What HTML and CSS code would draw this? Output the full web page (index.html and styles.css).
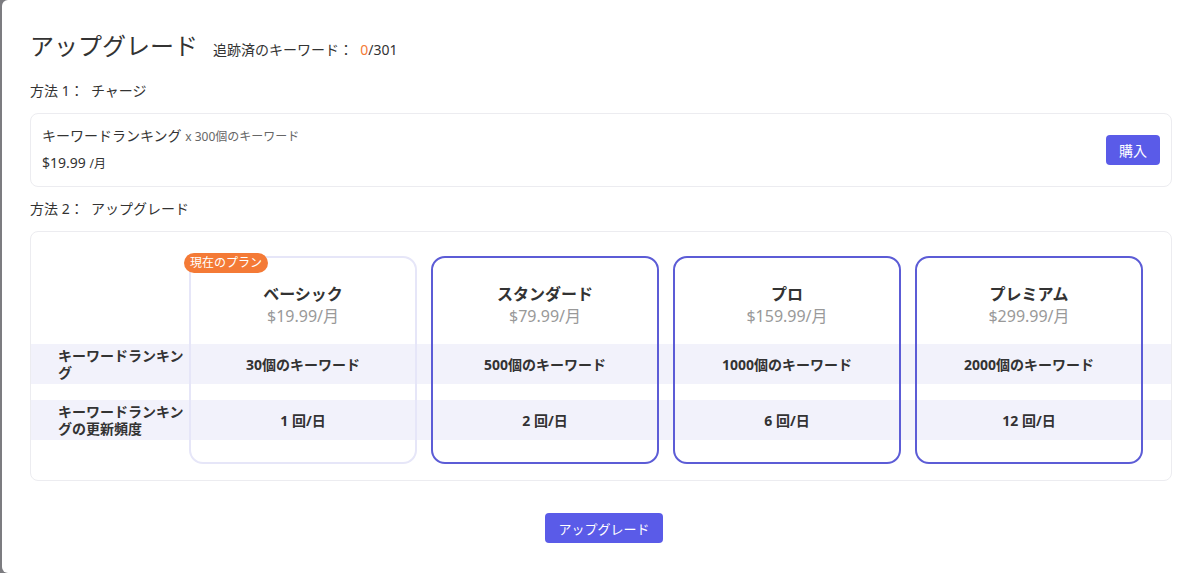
FILE: index.html
```html
<!DOCTYPE html>
<html lang="ja">
<head>
    <meta charset="UTF-8">
    <meta name="viewport" content="width=device-width, initial-scale=1.0">
    <title>アップグレード</title>
    <link rel="stylesheet" href="styles.css">
</head>
<body>
    <div class="modal">
        <div class="modal-head">
            <h2>アップグレード</h2>
            <span class="tracked">追跡済のキーワード：&nbsp;&nbsp;<span class="used">0</span>/301</span>
        </div>

        <div class="method">方法 1：&nbsp;&nbsp;チャージ</div>
        <div class="charge-card">
            <div class="charge-info">
                <div class="charge-title">キーワードランキング <small>x 300個のキーワード</small></div>
                <div class="charge-price">$19.99 <small>/月</small></div>
            </div>
            <button class="btn buy">購入</button>
        </div>

        <div class="method second">方法 2：&nbsp;&nbsp;アップグレード</div>
        <div class="plans-card">
            <div class="plans">
                <div class="row-bg r1"></div>
                <div class="row-bg r2"></div>

                <div class="label r1">キーワードランキング</div>
                <div class="label r2">キーワードランキングの更新頻度</div>

                <div class="plan current c1">
                    <span class="badge">現在のプラン</span>
                    <div class="plan-name">ベーシック</div>
                    <div class="plan-price">$19.99/月</div>
                </div>
                <div class="plan c2">
                    <div class="plan-name">スタンダード</div>
                    <div class="plan-price">$79.99/月</div>
                </div>
                <div class="plan c3">
                    <div class="plan-name">プロ</div>
                    <div class="plan-price">$159.99/月</div>
                </div>
                <div class="plan c4">
                    <div class="plan-name">プレミアム</div>
                    <div class="plan-price">$299.99/月</div>
                </div>

                <div class="cell r1 c1">30個のキーワード</div>
                <div class="cell r1 c2">500個のキーワード</div>
                <div class="cell r1 c3">1000個のキーワード</div>
                <div class="cell r1 c4">2000個のキーワード</div>

                <div class="cell r2 c1">1 回/日</div>
                <div class="cell r2 c2">2 回/日</div>
                <div class="cell r2 c3">6 回/日</div>
                <div class="cell r2 c4">12 回/日</div>
            </div>
        </div>

        <div class="actions">
            <button class="btn upgrade">アップグレード</button>
        </div>
    </div>
</body>
</html>
```

FILE: styles.css
```css
html, body {
    margin: 0;
    height: 100%;
}
body {
    background-color: #7c7c80;
    font-family: "Noto Sans", "Noto Sans CJK JP", sans-serif;
    color: #333;
    overflow: hidden;
}
.modal {
    box-sizing: border-box;
    height: 573px;
    margin-left: 2px;
    padding: 30px 17px 0 28px;
    background-color: #fff;
    border-radius: 6px 0 0 6px;
}
.modal-head {
    display: flex;
    align-items: baseline;
    gap: 15px;
}
.modal-head h2 {
    margin: 0;
    font-size: 24px;
    font-weight: 400;
    line-height: 32px;
}
.tracked {
    font-size: 14px;
}
.used {
    color: #f47a36;
}
.method {
    margin-top: 19px;
    font-size: 14px;
    line-height: 20px;
}
.method.second {
    margin-top: 12px;
}
.charge-card {
    margin-top: 12px;
    display: flex;
    align-items: center;
    justify-content: space-between;
    padding: 12px 11px;
    border: 1px solid #ececf0;
    border-radius: 8px;
}
.charge-title,
.charge-price {
    font-size: 14px;
    line-height: 20px;
}
.charge-price {
    margin-top: 6px;
}
.charge-info small {
    font-size: 12px;
    color: #666;
}
.charge-price small {
    color: #333;
}
.btn {
    border: none;
    border-radius: 4px;
    background-color: #5a5be8;
    color: #fff;
    font-family: inherit;
    cursor: pointer;
    padding: 0;
}
.buy {
    width: 54px;
    height: 30px;
    font-size: 14px;
}
.plans-card {
    margin-top: 12px;
    padding: 24px 0 16px;
    border: 1px solid #ececf0;
    border-radius: 8px;
}
.plans {
    display: grid;
    grid-template-columns: 158px 228px 14px 228px 14px 228px 14px 228px 1fr;
    grid-template-rows: 88px 40px 16px 40px 24px;
}
.row-bg {
    grid-column: 1 / -1;
    background-color: #f2f2fb;
}
.r1 { grid-row: 2; }
.r2 { grid-row: 4; }
.c1 { grid-column: 2; }
.c2 { grid-column: 4; }
.c3 { grid-column: 6; }
.c4 { grid-column: 8; }
.label {
    grid-column: 1;
    width: 128px;
    padding-left: 27px;
    align-self: center;
    font-size: 14px;
    font-weight: 700;
    line-height: 17px;
}
.plan {
    grid-row: 1 / -1;
    position: relative;
    box-sizing: border-box;
    padding-top: 25px;
    border: 2px solid #5c5cd6;
    border-radius: 14px;
    text-align: center;
}
.plan.current {
    border-color: #e6e6f8;
}
.plan-name {
    font-size: 16px;
    font-weight: 700;
    line-height: 22px;
}
.plan-price {
    font-size: 16px;
    line-height: 22px;
    color: #999;
}
.badge {
    position: absolute;
    left: -7px;
    top: -5px;
    width: 84px;
    height: 20px;
    line-height: 20px;
    border-radius: 10px;
    background-color: #f47a36;
    color: #fff;
    font-size: 12px;
}
.cell {
    display: flex;
    align-items: center;
    justify-content: center;
    font-size: 14px;
    font-weight: 700;
}
.actions {
    margin-top: 32px;
    display: flex;
    justify-content: center;
    padding-left: 6px;
}
.upgrade {
    width: 118px;
    height: 30px;
    font-size: 13px;
}
```
